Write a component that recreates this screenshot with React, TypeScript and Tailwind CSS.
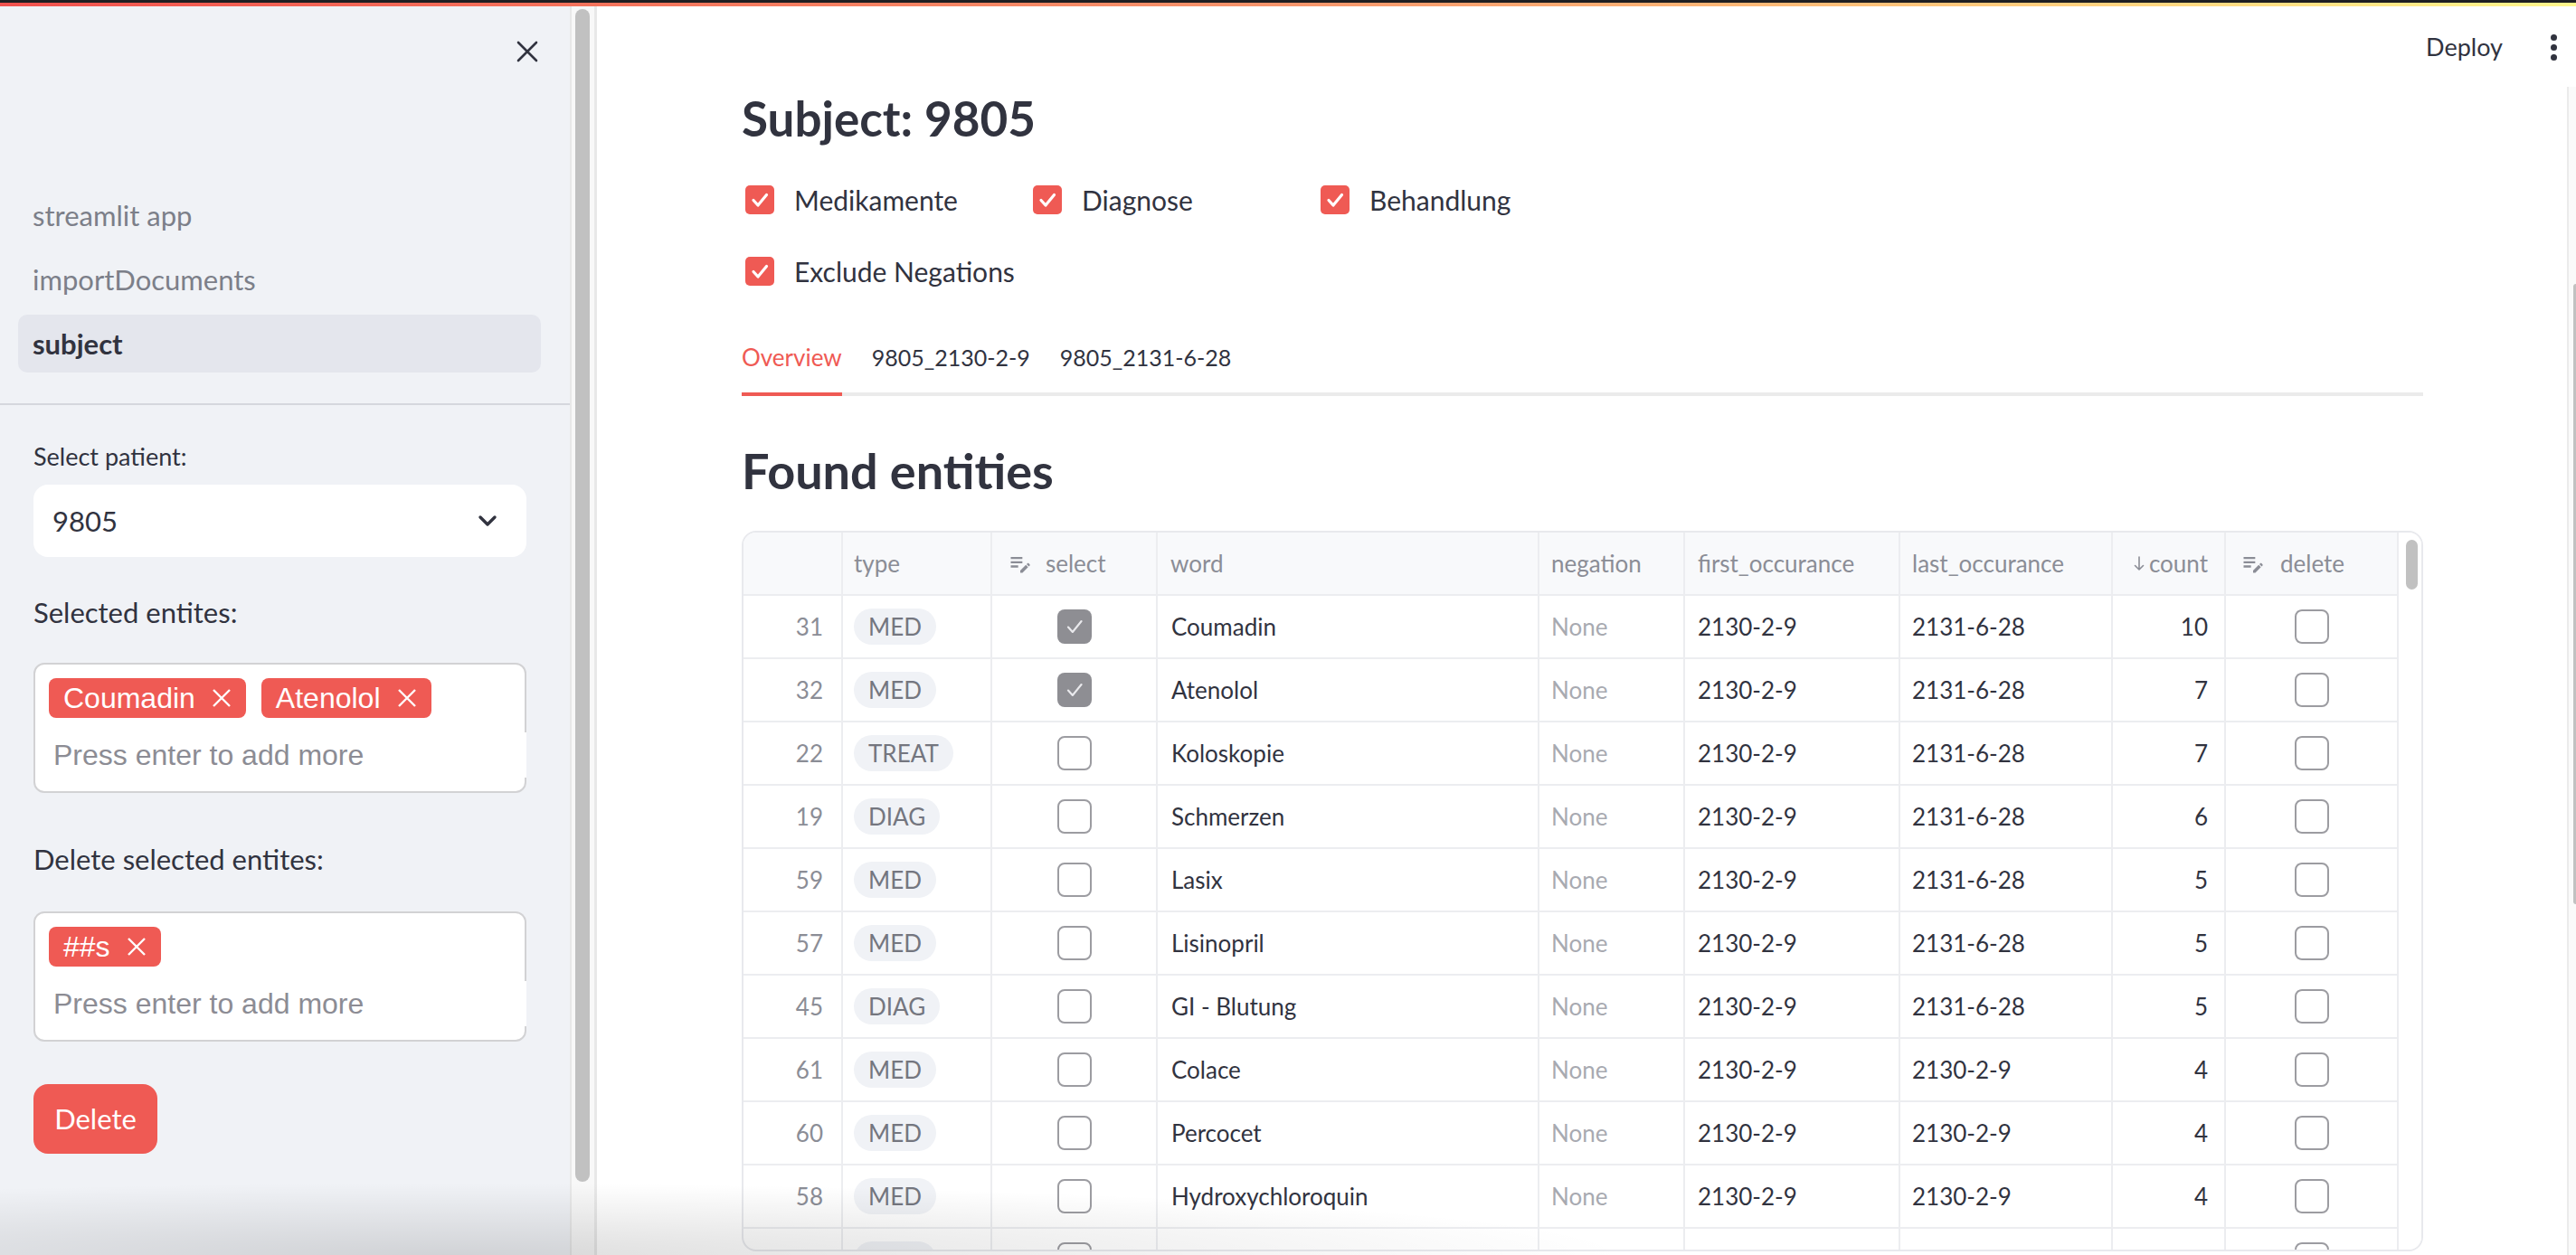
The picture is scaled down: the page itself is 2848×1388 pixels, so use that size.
import React from "react";

type Row = {
  idx: number;
  type: string;
  sel: boolean;
  word: string;
  first: string;
  last: string;
  count: number;
};

const rows: Row[] = [
  { idx: 31, type: "MED", sel: true, word: "Coumadin", first: "2130-2-9", last: "2131-6-28", count: 10 },
  { idx: 32, type: "MED", sel: true, word: "Atenolol", first: "2130-2-9", last: "2131-6-28", count: 7 },
  { idx: 22, type: "TREAT", sel: false, word: "Koloskopie", first: "2130-2-9", last: "2131-6-28", count: 7 },
  { idx: 19, type: "DIAG", sel: false, word: "Schmerzen", first: "2130-2-9", last: "2131-6-28", count: 6 },
  { idx: 59, type: "MED", sel: false, word: "Lasix", first: "2130-2-9", last: "2131-6-28", count: 5 },
  { idx: 57, type: "MED", sel: false, word: "Lisinopril", first: "2130-2-9", last: "2131-6-28", count: 5 },
  { idx: 45, type: "DIAG", sel: false, word: "GI - Blutung", first: "2130-2-9", last: "2131-6-28", count: 5 },
  { idx: 61, type: "MED", sel: false, word: "Colace", first: "2130-2-9", last: "2130-2-9", count: 4 },
  { idx: 60, type: "MED", sel: false, word: "Percocet", first: "2130-2-9", last: "2130-2-9", count: 4 },
  { idx: 58, type: "MED", sel: false, word: "Hydroxychloroquin", first: "2130-2-9", last: "2130-2-9", count: 4 },
  { idx: 56, type: "MED", sel: false, word: "Protonix", first: "2130-2-9", last: "2130-2-9", count: 4 },
];

function CloseIcon() {
  return (
    <svg width="24" height="24" viewBox="0 0 24 24" fill="none">
      <path d="M2 2L22 22M22 2L2 22" stroke="#31333f" strokeWidth="2.6" strokeLinecap="round" />
    </svg>
  );
}

function Chevron() {
  return (
    <svg width="22" height="14" viewBox="0 0 22 14" fill="none">
      <path d="M3 3L11 11L19 3" stroke="#31333f" strokeWidth="3.4" strokeLinecap="round" strokeLinejoin="round" />
    </svg>
  );
}

function TagX() {
  return (
    <svg width="22" height="22" viewBox="0 0 22 22" fill="none">
      <path d="M2 2L20 20M20 2L2 20" stroke="white" strokeWidth="2.4" />
    </svg>
  );
}

function RedCheckbox() {
  return (
    <div className="w-[32px] h-[32px] rounded-[5px] bg-[#ef5a54] flex items-center justify-center shrink-0">
      <svg width="24" height="24" viewBox="0 0 24 24" fill="none">
        <path d="M5 12.5L10 18L19.5 6.5" stroke="white" strokeWidth="3.2" strokeLinecap="round" strokeLinejoin="round" />
      </svg>
    </div>
  );
}

function EditNote() {
  return (
    <svg width="28" height="28" viewBox="0 0 24 24" fill="#8b8d96">
      <path d="M3 10h11v2H3v-2zm0-2h11V6H3v2zm0 8h7v-2H3v2zm15.01-3.13.71-.71c.39-.39 1.02-.39 1.41 0l.71.71c.39.39.39 1.02 0 1.41l-.71.71-2.12-2.12zm-.71.71-5.3 5.3V21h2.12l5.3-5.3-2.12-2.12z" />
    </svg>
  );
}

function TableCheck({ checked }: { checked: boolean }) {
  if (checked) {
    return (
      <div className="w-[38px] h-[38px] rounded-[8px] bg-[#8e8e93] flex items-center justify-center">
        <svg width="26" height="26" viewBox="0 0 24 24" fill="none">
          <path d="M5.5 12.5L10 17.5L19 6.5" stroke="#e9e9ec" strokeWidth="2" strokeLinecap="round" strokeLinejoin="round" />
        </svg>
      </div>
    );
  }
  return <div className="w-[38px] h-[38px] rounded-[8px] border-2 border-[#9c9ca1] bg-white" />;
}

function Tag({ label }: { label: string }) {
  return (
    <div className="h-[44px] rounded-[8px] bg-[#ef5a54] flex items-center pl-[16px] pr-[16px] gap-[18px] text-white text-[32px] leading-none font-['Liberation_Sans',Arial,sans-serif]">
      <span>{label}</span>
      <TagX />
    </div>
  );
}

function TagBox({ tags }: { tags: string[] }) {
  return (
    <div className="h-[144px] rounded-[12px] border-2 border-[#d2d2d4] bg-white pt-[15px] pl-[15px]">
      <div className="flex gap-[17px]">
        {tags.map((t) => (
          <Tag key={t} label={t} />
        ))}
      </div>
      <div className="mt-[16px] h-[50px] bg-white mr-[-2px] flex items-center pl-[5px] text-[32px] text-[#8c8c94] font-['Liberation_Sans',Arial,sans-serif]">
        Press enter to add more
      </div>
    </div>
  );
}

const cell = "border-r-2 border-b-2 border-[#ecedf0] flex items-center h-[70px]";

export default function App() {
  return (
    <div className="relative w-[2848px] h-[1388px] overflow-hidden bg-white flex font-['Lato',sans-serif] text-[#31333f]">
      {/* top decoration */}
      <div className="absolute top-0 left-0 w-full z-50">
        <div className="h-[3px] bg-[#1f1f22]" />
        <div className="h-[4px] bg-linear-to-r from-[#f0514e] via-[#f7956c] to-[#fff68c]" />
      </div>

      {/* sidebar */}
      <aside className="w-[630px] h-full bg-[#f0f2f6] flex flex-col shrink-0">
        <div className="flex justify-end pt-[45px] pr-[35px]">
          <CloseIcon />
        </div>
        <nav className="mt-[137px] flex flex-col gap-[7px] pl-[20px] pr-[32px]">
          <div className="h-[64px] flex items-center px-[16px] rounded-[10px] text-[31px] text-[#7c7f89]">streamlit app</div>
          <div className="h-[64px] flex items-center px-[16px] rounded-[10px] text-[31px] text-[#7c7f89]">importDocuments</div>
          <div className="h-[64px] flex items-center px-[16px] rounded-[10px] text-[31px] font-bold bg-[#e4e6ed] text-[#31333f]">subject</div>
        </nav>
        <div className="mt-[34px] h-[2px] bg-[#d5d7dd]" />
        <div className="pl-[37px] pr-[48px] flex flex-col">
          <div className="mt-[37px] h-[40px] leading-[40px] text-[27px]">Select patient:</div>
          <div className="mt-[11px] h-[80px] rounded-[16px] bg-white flex items-center justify-between pl-[21px] pr-[32px] text-[31px]">
            <span>9805</span>
            <Chevron />
          </div>
          <div className="mt-[39px] h-[44px] leading-[44px] text-[31px]">Selected entites:</div>
          <div className="mt-[34px]">
            <TagBox tags={["Coumadin", "Atenolol"]} />
          </div>
          <div className="mt-[51px] h-[44px] leading-[44px] text-[31px]">Delete selected entites:</div>
          <div className="mt-[36px]">
            <TagBox tags={["##s"]} />
          </div>
          <div className="mt-[47px] w-[137px] h-[77px] rounded-[16px] bg-[#ef5a54] text-white text-[31px] flex items-center justify-center">
            Delete
          </div>
        </div>
      </aside>

      {/* sidebar scrollbar */}
      <div className="w-[30px] h-full shrink-0 bg-[#f8f8f8] border-l-2 border-r-[3px] border-[#e8e8e8] pl-[4px] pt-[10px]">
        <div className="w-[16px] h-[1297px] rounded-full bg-[#c1c1c1]" />
      </div>

      {/* main */}
      <main className="flex-1 flex flex-col h-full">
        <header className="h-[96px] shrink-0 flex items-center justify-end pt-[8px] pr-[21px] gap-[53px]">
          <span className="text-[27px] text-[#31333f]">Deploy</span>
          <div className="flex flex-col gap-[4px] items-center">
            <div className="w-[7px] h-[7px] rounded-full bg-[#31333f]" />
            <div className="w-[7px] h-[7px] rounded-full bg-[#31333f]" />
            <div className="w-[7px] h-[7px] rounded-full bg-[#31333f]" />
          </div>
        </header>
        <div className="flex-1 flex min-h-0">
          <div className="flex-1 pl-[160px] pr-[159px] flex flex-col">
            <h3 className="h-[70px] leading-[70px] text-[53px] font-bold">Subject: 9805</h3>
            <div className="mt-[31px] grid grid-cols-[283px_283px_283px] gap-x-[35px]">
              {["Medikamente", "Diagnose", "Behandlung"].map((l) => (
                <div key={l} className="h-[48px] flex items-center gap-[22px] pl-[4px]">
                  <RedCheckbox />
                  <span className="text-[30px]">{l}</span>
                </div>
              ))}
            </div>
            <div className="mt-[31px] h-[48px] flex items-center gap-[22px] pl-[4px]">
              <RedCheckbox />
              <span className="text-[30px]">Exclude Negations</span>
            </div>

            {/* tabs */}
            <div className="mt-[51px] flex gap-[33px] border-b-4 border-[#ebebeb]">
              <div className="-mb-[4px] border-b-4 border-[#ef5a54] pb-[19px]">
                <div className="h-[40px] leading-[40px] text-[26px] text-[#ef5a54]">Overview</div>
              </div>
              <div className="pb-[19px]">
                <div className="h-[40px] leading-[40px] text-[25px]">9805_2130-2-9</div>
              </div>
              <div className="pb-[19px]">
                <div className="h-[40px] leading-[40px] text-[25px]">9805_2131-6-28</div>
              </div>
            </div>

            <h3 className="mt-[48px] h-[70px] leading-[70px] text-[54px] font-bold">Found entities</h3>

            {/* table */}
            <div className="mt-[31px] w-[1859px] h-[797px] border-2 border-[#e8e9ed] rounded-[16px] overflow-hidden flex">
              <div className="w-[1830px] shrink-0 grid grid-cols-[110px_165px_183px_422px_161px_238px_235px_125px_191px] auto-rows-[70px] text-[26px]">
                {/* header */}
                <div className={`${cell} bg-[#f8f9fb]`} />
                <div className={`${cell} bg-[#f8f9fb] pl-[12px] text-[#8b8d96]`}>type</div>
                <div className={`${cell} bg-[#f8f9fb] pl-[17px] gap-[14px] text-[#8b8d96]`}>
                  <EditNote />
                  <span>select</span>
                </div>
                <div className={`${cell} bg-[#f8f9fb] pl-[14px] text-[#8b8d96]`}>word</div>
                <div className={`${cell} bg-[#f8f9fb] pl-[13px] text-[#8b8d96]`}>negation</div>
                <div className={`${cell} bg-[#f8f9fb] pl-[14px] text-[#8b8d96]`}>first_occurance</div>
                <div className={`${cell} bg-[#f8f9fb] pl-[13px] text-[#8b8d96]`}>last_occurance</div>
                <div className={`${cell} bg-[#f8f9fb] justify-end pr-[18px] gap-[5px] text-[#8b8d96]`}>
                  <svg width="12" height="18" viewBox="0 0 12 18" fill="none">
                    <path d="M6 2V16M1.5 11.5L6 16L10.5 11.5" stroke="#8b8d96" strokeWidth="1.6" strokeLinecap="round" strokeLinejoin="round" />
                  </svg>
                  <span>count</span>
                </div>
                <div className={`${cell} bg-[#f8f9fb] pl-[16px] gap-[16px] text-[#8b8d96]`}>
                  <EditNote />
                  <span>delete</span>
                </div>

                {rows.map((r) => (
                  <React.Fragment key={r.idx}>
                    <div className={`${cell} justify-end pr-[20px] text-[#8b8d96]`}>{r.idx}</div>
                    <div className={`${cell} pl-[12px]`}>
                      <span className="h-[40px] px-[16px] rounded-full bg-[#f0f2f6] text-[#74767f] flex items-center">{r.type}</span>
                    </div>
                    <div className={`${cell} justify-center`}>
                      <TableCheck checked={r.sel} />
                    </div>
                    <div className={`${cell} pl-[15px]`}>{r.word}</div>
                    <div className={`${cell} pl-[13px] text-[#a8aab1]`}>None</div>
                    <div className={`${cell} pl-[14px]`}>{r.first}</div>
                    <div className={`${cell} pl-[13px]`}>{r.last}</div>
                    <div className={`${cell} justify-end pr-[18px]`}>{r.count}</div>
                    <div className={`${cell} justify-center`}>
                      <TableCheck checked={false} />
                    </div>
                  </React.Fragment>
                ))}
              </div>
              <div className="flex-1 bg-white pl-[8px] pt-[8px]">
                <div className="w-[13px] h-[55px] rounded-full bg-[#c1c1c1]" />
              </div>
            </div>
          </div>

          {/* main scrollbar */}
          <div className="w-[10px] shrink-0 bg-[#fafafa] border-l-2 border-[#ebebeb] flex justify-end pt-[218px]">
            <div className="w-[3px] h-[686px] bg-[#c1c1c1] rounded-l-full" />
          </div>
        </div>
      </main>

      {/* bottom shadow */}
      <div className="absolute bottom-0 left-0 w-[2848px] h-[80px] pointer-events-none bg-[radial-gradient(ellipse_1300px_80px_at_500px_100%,rgba(0,0,0,0.13),transparent)]" />
    </div>
  );
}
